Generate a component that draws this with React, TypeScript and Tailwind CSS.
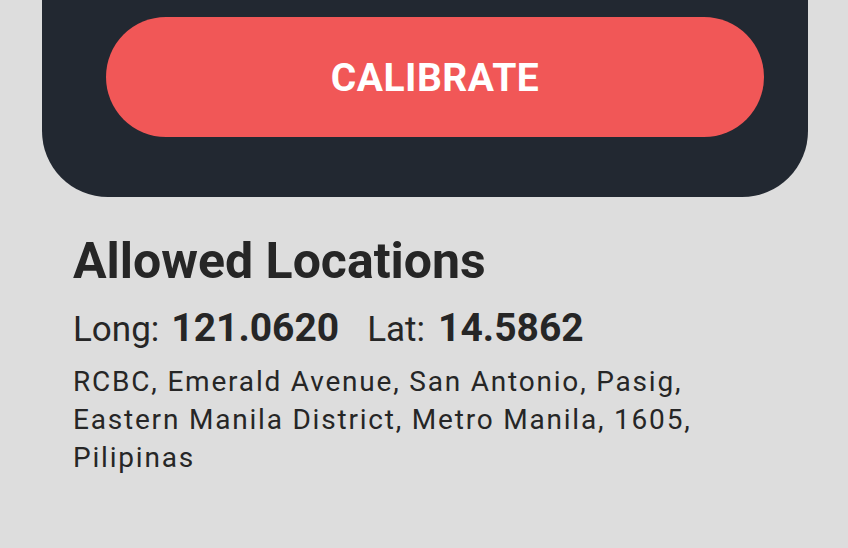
export default function App() {
  return (
    <div className="w-[848px] h-[548px] bg-[#dddddd] overflow-hidden font-['Roboto',sans-serif] text-[#262626]">
      <div className="ml-[42px] w-[766px] rounded-b-[66px] bg-[#222831] pl-[64px] pr-[44px] pt-[17px] pb-[60px]">
        <button className="flex h-[120px] w-full items-center justify-center rounded-full bg-[#f15757] pt-[2px] text-[39px] font-bold tracking-[0.5px] text-white">
          CALIBRATE
        </button>
      </div>
      <div className="px-[73px] pt-[34px]">
        <h2 className="text-[50px] font-bold leading-[60px]">Allowed Locations</h2>
        <div className="mt-[15px] flex items-baseline leading-[44px]">
          <span className="text-[35px]">Long:</span>
          <span className="ml-[12px] text-[39px] font-bold">121.0620</span>
          <span className="ml-[28px] text-[35px]">Lat:</span>
          <span className="ml-[13px] text-[39px] font-bold">14.5862</span>
        </div>
        <p className="mt-[11px] w-[660px] text-[28px] leading-[38px] tracking-[1.8px]">
          RCBC, Emerald Avenue, San Antonio, Pasig, Eastern Manila District, Metro Manila, 1605, Pilipinas
        </p>
      </div>
    </div>
  )
}
